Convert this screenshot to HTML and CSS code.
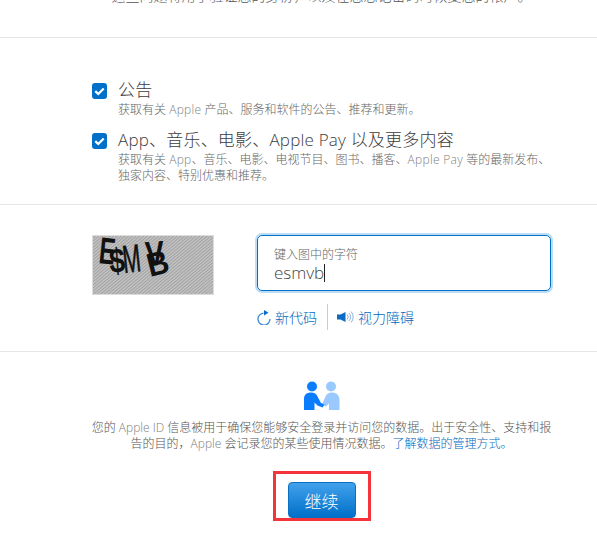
FILE: index.html
```html
<!DOCTYPE html>
<html lang="zh-CN">
<head>
<meta charset="utf-8">
<title>创建 Apple ID</title>
<link rel="stylesheet" href="styles.css">
</head>
<body>
<section class="intro">
  <p class="intro-text">这些问题将用于验证您的身份，以及在您忘记密码时恢复您的帐户。</p>
</section>
<section class="subs">
  <div class="sub">
    <span class="check"><svg viewBox="0 0 16 16" width="16" height="16"><path d="M3.500 8.200 6.700 11.200 12.500 5.400" fill="none" stroke="#fff" stroke-width="2.400"/></svg></span>
    <div class="sub-body">
      <div class="sub-title">公告</div>
      <div class="sub-desc">获取有关 <span class="latin">Apple</span> 产品、服务和软件的公告、推荐和更新。</div>
    </div>
  </div>
  <div class="sub">
    <span class="check"><svg viewBox="0 0 16 16" width="16" height="16"><path d="M3.500 8.200 6.700 11.200 12.500 5.400" fill="none" stroke="#fff" stroke-width="2.400"/></svg></span>
    <div class="sub-body">
      <div class="sub-title">App、音乐、电影、Apple Pay 以及更多内容</div>
      <div class="sub-desc">获取有关 <span class="latin">App</span>、音乐、电影、电视节目、图书、播客、<span class="latin">Apple Pay</span> 等的最新发布、独家内容、特别优惠和推荐。</div>
    </div>
  </div>
</section>
<section class="captcha">
  <svg class="captcha-img" viewBox="0 0 122 60" width="122" height="60">
    <defs>
      <pattern id="hatch" width="2.400" height="2.400" patternUnits="userSpaceOnUse" patternTransform="rotate(-40)">
        <rect width="2.400" height="2.400" fill="#c4c4c4"/>
        <rect width="2.400" height="1" fill="#a0a0a0"/>
      </pattern>
    </defs>
    <rect x="0.500" y="0.500" width="121" height="59" fill="url(#hatch)" stroke="#dcdcdc"/>
    <text class="cap" transform="translate(6 28) rotate(6) scale(.8 1.250)">E</text>
    <text class="cap" transform="translate(18 38) rotate(-4) scale(.95 1.150)">$</text>
    <text class="cap cap-thin" transform="translate(32 38) rotate(-6) scale(.72 1.300)">M</text>
    <text class="cap" transform="translate(58 42) rotate(-14) scale(1 1.100)">B</text>
    <text class="cap" transform="translate(54 31) rotate(-4) scale(.95 1.150)">V</text>
  </svg>
  <div class="captcha-side">
    <div class="field">
      <div class="field-label">键入图中的字符</div>
      <div class="field-value">esmvb<span class="caret"></span></div>
    </div>
    <div class="captcha-links">
      <a class="cap-link new-code" href="#">
        <svg viewBox="0 0 15 16" width="15" height="16"><path d="M13 10A6 6 0 1 1 6.500 4.100" fill="none" stroke="#3b8ad8" stroke-width="1.300"/><path d="M7 1 11.500 3.800 7 6.500Z" fill="#0a6cc4"/></svg>
        <span>新代码</span>
      </a>
      <a class="cap-link vision" href="#">
        <svg viewBox="0 0 18 16" width="18" height="16"><path d="M0 5.500h3.500L8.500 3v10l-5-2.500H0Z" fill="#0a6cc4"/><path d="M10 5.500a3.500 3.500 0 0 1 0 5M12 4a6 6 0 0 1 0 8M14 2.500a8 8 0 0 1 0 11" fill="none" stroke="#8fb4dc" stroke-width="1"/></svg>
        <span>视力障碍</span>
      </a>
    </div>
  </div>
</section>
<section class="privacy">
  <svg class="people" viewBox="0 0 36 30" width="36" height="30">
    <circle cx="27" cy="5.500" r="5" fill="#99c9ff"/>
    <path d="M35.500 29V19c0-5-3.200-7.500-7.500-7.500-3.200 0-5.500 1.500-6.500 4l-3.500 8 4 2 3-3V29Z" fill="#99c9ff"/>
    <circle cx="8" cy="5.500" r="5" fill="#0a7dff"/>
    <path d="M0 29V18c0-4.500 3-6.500 7-6.500 3.500 0 5.500 1.500 6.500 4l3.500 6.500 3.500 1.500-2 3-5-2-3-3V29Z" fill="#0a7dff"/>
  </svg>
  <p class="privacy-text">您的 <span class="latin">Apple ID</span> 信息被用于确保您能够安全登录并访问您的数据。出于安全性、支持和报告的目的，<span class="latin">Apple</span> 会记录您的某些使用情况数据。<a class="privacy-link" href="#">了解数据的管理方式。</a></p>
  <div class="highlight"><button class="continue" type="button">继续</button></div>
</section>
</body>
</html>
```
FILE: styles.css
```css
* { box-sizing: border-box; }
html, body { margin: 0; padding: 0; }
body {
  width: 597px;
  height: 550px;
  overflow: hidden;
  background: #fff;
  color: #333;
  font-family: "Open Sans", "Noto Sans CJK SC", sans-serif;
  font-weight: 300;
}
p { margin: 0; }
a { color: #0068bd; text-decoration: none; }
.latin { color: #808080; }

.intro { display: flow-root; height: 38px; padding-left: 46px; border-bottom: 1px solid #e6e6e6; }
.intro-text {
  margin-top: -12px;
  text-align: center;
  font-size: 14px;
  line-height: 16px;
  color: #555;
}

.subs { height: 167px; padding: 42px 42px 0 92px; border-bottom: 1px solid #e6e6e6; }
.sub { display: flex; gap: 10px; margin-bottom: 12px; }
.check {
  flex: none;
  width: 15px;
  height: 16px;
  margin-top: 3px;
  border-radius: 3px;
  background: #0070c9;
  display: flex;
  align-items: center;
  justify-content: center;
}
.sub-body { flex: 1; min-width: 0; padding-left: 1px; }
.sub-title { height: 20px; font-size: 17px; line-height: 20px; letter-spacing: .2px; color: #3c3c3c; white-space: nowrap; }
.sub-desc { font-size: 12px; line-height: 16px; color: #666; margin-top: 2px; }
.sub-desc .latin { letter-spacing: .3px; }

.captcha { height: 147px; padding: 30px 46px 0 92px; display: flex; gap: 43px; border-bottom: 1px solid #e6e6e6; }
.captcha-img { flex: none; }
.cap { font-family: "Liberation Sans", sans-serif; font-size: 30px; font-weight: 700; fill: #111; }
.cap-thin { font-weight: 400; stroke: #111; stroke-width: .5px; }
.captcha-side { flex: 1; min-width: 0; }
.field {
  height: 56px;
  padding: 10px 16px 0;
  border: 1px solid #0070c9;
  border-radius: 5px;
  box-shadow: 0 0 0 2px #bcdcf8;
}
.field-label { height: 17px; font-size: 12px; line-height: 17px; color: #666; }
.field-value { height: 19px; font-size: 17px; line-height: 19px; color: #444; display: flex; align-items: center; }
.caret { width: 1px; height: 18px; background: #222; }
.captcha-links { display: flex; align-items: center; margin-top: 13px; height: 26px; }
.cap-link { display: flex; align-items: center; gap: 3px; font-size: 14px; height: 26px; }
.new-code { padding-right: 10px; border-right: 1px solid #ccc; }
.vision { padding-left: 9px; gap: 3px; }

.privacy { padding: 29px 0 0 46px; display: flex; flex-direction: column; align-items: center; }
.people { display: block; margin-bottom: 9px; }
.privacy-text {
  width: 470px;
  text-align: center;
  font-size: 12px;
  line-height: 16px;
  color: #555;
}
.privacy-link { color: #0068bd; }
.highlight {
  width: 98px;
  height: 50px;
  margin-top: 19px;
  border: 3px solid #f5333a;
  display: flex;
  align-items: flex-end;
  justify-content: center;
}
.continue {
  width: 68px;
  height: 36px;
  padding: 0;
  border: 1px solid #0b6fc2;
  border-radius: 4px;
  background: linear-gradient(#42a1ec, #0070c9);
  color: #fff;
  font: 300 17px "Open Sans", "Noto Sans CJK SC", sans-serif;
}
```
